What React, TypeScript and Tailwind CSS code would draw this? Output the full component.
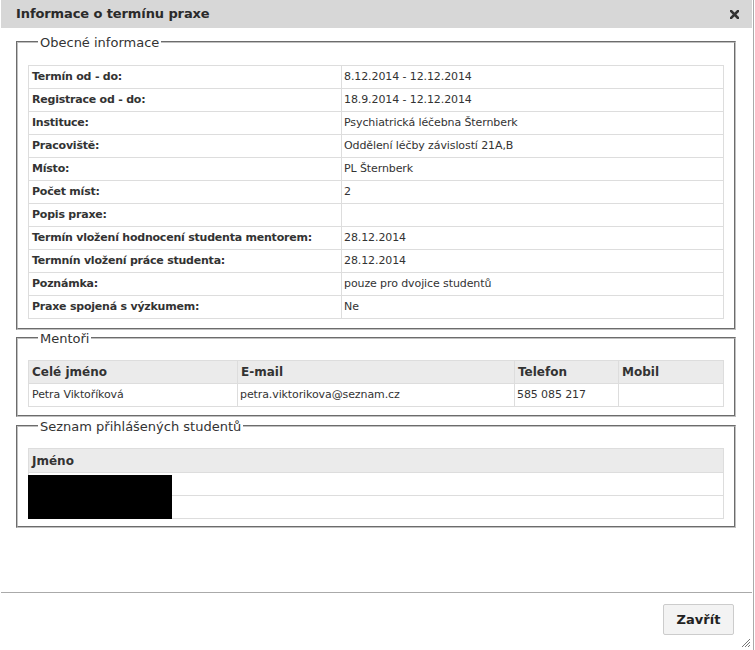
import React from 'react';

const info: [string, string][] = [
  ['Termín od - do:', '8.12.2014 - 12.12.2014'],
  ['Registrace od - do:', '18.9.2014 - 12.12.2014'],
  ['Instituce:', 'Psychiatrická léčebna Šternberk'],
  ['Pracoviště:', 'Oddělení léčby závislostí 21A,B'],
  ['Místo:', 'PL Šternberk'],
  ['Počet míst:', '2'],
  ['Popis praxe:', ''],
  ['Termín vložení hodnocení studenta mentorem:', '28.12.2014'],
  ['Termnín vložení práce studenta:', '28.12.2014'],
  ['Poznámka:', 'pouze pro dvojice studentů'],
  ['Praxe spojená s výzkumem:', 'Ne'],
];

function Box({ title, className, children }: { title: string; className?: string; children: React.ReactNode }) {
  return (
    <fieldset className={`w-[720px] border-2 [border-style:groove] border-[#c0c0c0] px-[10px] ${className ?? ''}`}>
      <legend className="ml-[10px] px-[2px] text-[13px] leading-[16px] text-[#333]">
        <span className="relative top-[1px]">{title}</span>
      </legend>
      {children}
    </fieldset>
  );
}

export default function App() {
  return (
    <div className="relative h-[650px] w-[755px] bg-white font-['DejaVu_Sans',Verdana,sans-serif] text-[#333]">
      <div className="flex h-full w-[754px] flex-col border-r border-[#aaa] px-[1px]">
        {/* title bar */}
        <div className="flex h-[28px] shrink-0 items-center justify-between bg-[#d7d7d7] pl-[15px] pr-[13px]">
          <span className="text-[13px] font-bold tracking-[-0.1px] text-[#2a2a2a]">
            Informace o termínu praxe
          </span>
          <svg width="9" height="9" viewBox="0 0 9 9" className="mt-[1px]">
            <path d="M1 1 L8 8 M8 1 L1 8" stroke="#333" strokeWidth="2.6" strokeLinecap="square" />
          </svg>
        </div>

        {/* content */}
        <div className="flex-1 pl-[15px]">
          <Box title="Obecné informace" className="mt-[6px] pt-[15px] pb-[9px]">
            <table className="w-[696px] border-collapse text-[11px]">
              <tbody>
                {info.map(([k, v]) => (
                  <tr key={k} className="h-[23px]">
                    <td className="w-[313px] border border-[#ddd] px-[3px] py-0 font-bold tracking-[-0.22px] text-[#333]">{k}</td>
                    <td className="border border-[#ddd] px-[2px] py-0 tracking-[-0.1px] text-[#333]">{v}</td>
                  </tr>
                ))}
              </tbody>
            </table>
          </Box>

          <Box title="Mentoři" className="pt-[14px] pb-[8px]">
            <table className="w-[696px] border-collapse text-[11px]">
              <thead>
                <tr className="h-[23px] bg-[#ebebeb] text-left text-[12px] font-bold">
                  <th className="w-[209px] border border-[#ddd] px-[3px] py-0">Celé jméno</th>
                  <th className="w-[277px] border border-[#ddd] px-[3px] py-0">E-mail</th>
                  <th className="w-[104px] border border-[#ddd] px-[3px] py-0">Telefon</th>
                  <th className="border border-[#ddd] px-[3px] py-0">Mobil</th>
                </tr>
              </thead>
              <tbody>
                <tr className="h-[23px]">
                  <td className="border border-[#ddd] px-[3px] py-0 tracking-[-0.1px]">Petra Viktoříková</td>
                  <td className="border border-[#ddd] px-[2px] py-0 tracking-[-0.1px]">petra.viktorikova@seznam.cz</td>
                  <td className="border border-[#ddd] px-[2px] py-0 tracking-[-0.1px]">585 085 217</td>
                  <td className="border border-[#ddd] px-[2px] py-0"></td>
                </tr>
              </tbody>
            </table>
          </Box>

          <Box title="Seznam přihlášených studentů" className="mt-[1px] pt-[14px] pb-[7px]">
            <div className="relative">
              <table className="w-[696px] border-collapse text-[11px]">
                <thead>
                  <tr className="h-[24px] bg-[#ebebeb] text-left text-[12px] font-bold">
                    <th className="border border-[#ddd] px-[3px] py-0">Jméno</th>
                  </tr>
                </thead>
                <tbody>
                  <tr className="h-[23px]">
                    <td className="border border-[#ddd] px-[3px] py-0"></td>
                  </tr>
                  <tr className="h-[23px]">
                    <td className="border border-[#ddd] px-[3px] py-0"></td>
                  </tr>
                </tbody>
              </table>
              {/* redaction */}
              <div className="absolute left-0 top-[27px] h-[44px] w-[144px] bg-black" />
            </div>
          </Box>
        </div>

        {/* footer */}
        <div className="flex h-[58px] shrink-0 items-start justify-end border-t border-[#aaa] pr-[18px] pt-[11px]">
          <button className="h-[31px] w-[71px] rounded-[2px] border border-[#ccc] bg-[#f3f3f3] text-[13px] font-bold text-[#222]">
            Zavřít
          </button>
        </div>
      </div>

      {/* resize grip */}
      <svg width="10" height="10" viewBox="0 0 10 10" className="absolute bottom-[2px] right-[4px]">
        <path d="M9 1 L1 9 M9 4 L4 9 M9 7 L7 9" stroke="#777" strokeWidth="1" />
      </svg>
    </div>
  );
}
